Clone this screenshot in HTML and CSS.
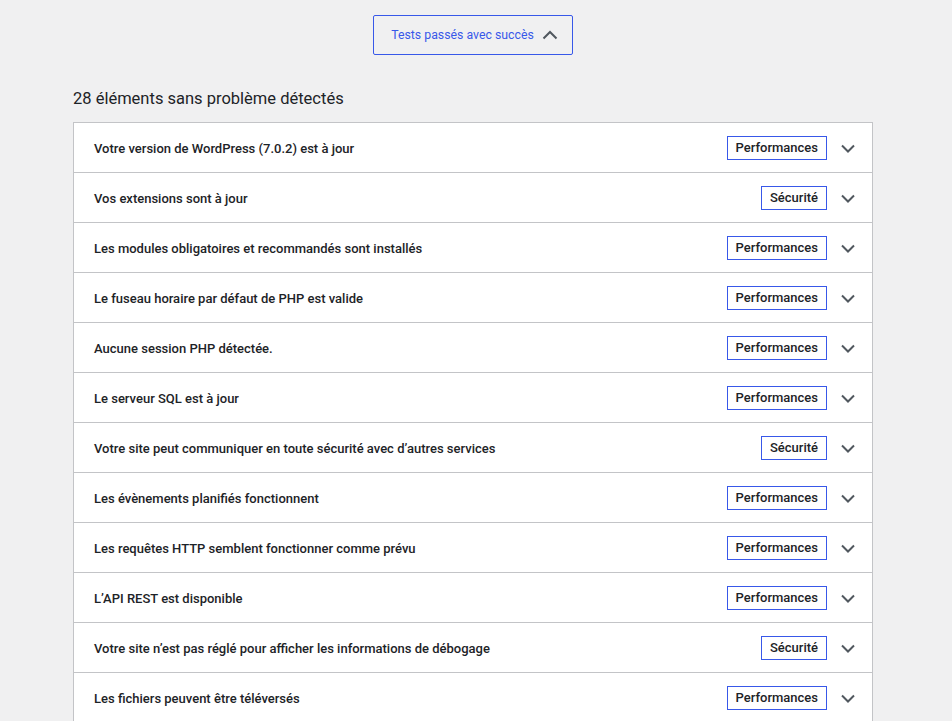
FILE: index.html
```html
<!DOCTYPE html>
<html lang="fr">
<head>
    <meta charset="UTF-8">
    <title>Santé du site</title>
    <link rel="stylesheet" href="styles.css">
</head>
<body>
    <div class="wrap">
        <div class="toggle-row">
            <button class="toggle-btn" type="button">
                Tests passés avec succès
                <svg class="chev-up" viewBox="0 0 20 20" width="20" height="20"><path d="M3.5 13.5 L10 7 L16.5 13.5" fill="none" stroke="#50575e" stroke-width="2"/></svg>
            </button>
        </div>

        <h3 class="count">28 éléments sans problème détectés</h3>

        <div class="list">
            <div class="item"><span class="title">Votre version de WordPress (7.0.2) est à jour</span><span class="badge">Performances</span><svg class="chev" viewBox="0 0 20 20" width="20" height="20"><path d="M4 7.5 L10 13.5 L16 7.5" fill="none" stroke="#50575e" stroke-width="2"/></svg></div>
            <div class="item"><span class="title">Vos extensions sont à jour</span><span class="badge">Sécurité</span><svg class="chev" viewBox="0 0 20 20" width="20" height="20"><path d="M4 7.5 L10 13.5 L16 7.5" fill="none" stroke="#50575e" stroke-width="2"/></svg></div>
            <div class="item"><span class="title">Les modules obligatoires et recommandés sont installés</span><span class="badge">Performances</span><svg class="chev" viewBox="0 0 20 20" width="20" height="20"><path d="M4 7.5 L10 13.5 L16 7.5" fill="none" stroke="#50575e" stroke-width="2"/></svg></div>
            <div class="item"><span class="title">Le fuseau horaire par défaut de PHP est valide</span><span class="badge">Performances</span><svg class="chev" viewBox="0 0 20 20" width="20" height="20"><path d="M4 7.5 L10 13.5 L16 7.5" fill="none" stroke="#50575e" stroke-width="2"/></svg></div>
            <div class="item"><span class="title">Aucune session PHP détectée.</span><span class="badge">Performances</span><svg class="chev" viewBox="0 0 20 20" width="20" height="20"><path d="M4 7.5 L10 13.5 L16 7.5" fill="none" stroke="#50575e" stroke-width="2"/></svg></div>
            <div class="item"><span class="title">Le serveur SQL est à jour</span><span class="badge">Performances</span><svg class="chev" viewBox="0 0 20 20" width="20" height="20"><path d="M4 7.5 L10 13.5 L16 7.5" fill="none" stroke="#50575e" stroke-width="2"/></svg></div>
            <div class="item"><span class="title">Votre site peut communiquer en toute sécurité avec d’autres services</span><span class="badge">Sécurité</span><svg class="chev" viewBox="0 0 20 20" width="20" height="20"><path d="M4 7.5 L10 13.5 L16 7.5" fill="none" stroke="#50575e" stroke-width="2"/></svg></div>
            <div class="item"><span class="title">Les évènements planifiés fonctionnent</span><span class="badge">Performances</span><svg class="chev" viewBox="0 0 20 20" width="20" height="20"><path d="M4 7.5 L10 13.5 L16 7.5" fill="none" stroke="#50575e" stroke-width="2"/></svg></div>
            <div class="item"><span class="title">Les requêtes HTTP semblent fonctionner comme prévu</span><span class="badge">Performances</span><svg class="chev" viewBox="0 0 20 20" width="20" height="20"><path d="M4 7.5 L10 13.5 L16 7.5" fill="none" stroke="#50575e" stroke-width="2"/></svg></div>
            <div class="item"><span class="title">L’API REST est disponible</span><span class="badge">Performances</span><svg class="chev" viewBox="0 0 20 20" width="20" height="20"><path d="M4 7.5 L10 13.5 L16 7.5" fill="none" stroke="#50575e" stroke-width="2"/></svg></div>
            <div class="item"><span class="title">Votre site n’est pas réglé pour afficher les informations de débogage</span><span class="badge">Sécurité</span><svg class="chev" viewBox="0 0 20 20" width="20" height="20"><path d="M4 7.5 L10 13.5 L16 7.5" fill="none" stroke="#50575e" stroke-width="2"/></svg></div>
            <div class="item"><span class="title">Les fichiers peuvent être téléversés</span><span class="badge">Performances</span><svg class="chev" viewBox="0 0 20 20" width="20" height="20"><path d="M4 7.5 L10 13.5 L16 7.5" fill="none" stroke="#50575e" stroke-width="2"/></svg></div>
        </div>
    </div>
</body>
</html>
```

FILE: styles.css
```css
body {
    margin: 0;
    padding: 0 6px 0 0;
    background-color: #f0f0f1;
    font-family: Roboto, "Noto Sans", sans-serif;
    color: #1d2327;
    font-size: 13px;
}
.wrap {
    max-width: 800px;
    margin: 0 auto;
}
.toggle-row {
    display: flex;
    justify-content: center;
    padding-top: 15px;
}
.toggle-btn {
    display: flex;
    align-items: center;
    justify-content: center;
    gap: 6px;
    width: 200px;
    height: 40px;
    padding: 0 0 0 5px;
    background: transparent;
    border: 1px solid #3858e9;
    border-radius: 2px;
    color: #3858e9;
    font-family: inherit;
    font-size: 12.3px;
    cursor: pointer;
}
.chev-up {
    display: block;
}
.count {
    margin: 33px 0 13px;
    font-size: 16.5px;
    font-weight: 400;
    line-height: 1.3;
}
.list {
    background: #fff;
    border: 1px solid #c3c4c7;
}
.item {
    display: flex;
    align-items: center;
    height: 49px;
    padding: 0 14px 0 20px;
    border-bottom: 1px solid #c3c4c7;
}
.title {
    flex: 1;
    padding-top: 2px;
    font-weight: 500;
}
.badge {
    border: 1px solid #3858e9;
    padding: 2px 8px;
    line-height: 18px;
    font-weight: 500;
    margin-right: 11px;
}
.chev {
    display: block;
}
```
